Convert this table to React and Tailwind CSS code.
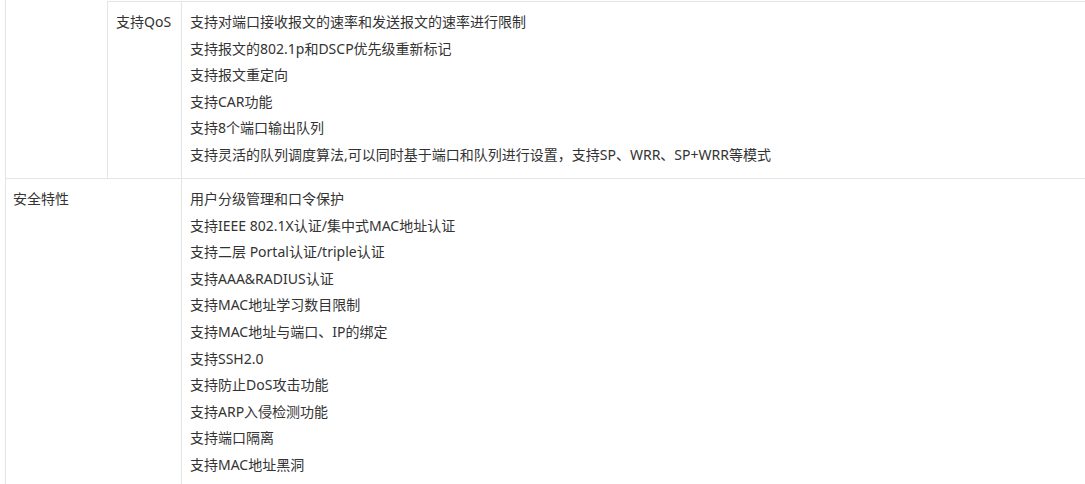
import React from 'react'

// spec table fragment: QoS sub-rows + security features
const qos = [
  '支持对端口接收报文的速率和发送报文的速率进行限制',
  '支持报文的802.1p和DSCP优先级重新标记',
  '支持报文重定向',
  '支持CAR功能',
  '支持8个端口输出队列',
  '支持灵活的队列调度算法,可以同时基于端口和队列进行设置，支持SP、WRR、SP+WRR等模式',
]

const security = [
  '用户分级管理和口令保护',
  '支持IEEE 802.1X认证/集中式MAC地址认证',
  '支持二层 Portal认证/triple认证',
  '支持AAA&RADIUS认证',
  '支持MAC地址学习数目限制',
  '支持MAC地址与端口、IP的绑定',
  '支持SSH2.0',
  '支持防止DoS攻击功能',
  '支持ARP入侵检测功能',
  '支持端口隔离',
  '支持MAC地址黑洞',
]

function Lines({ items }) {
  return items.map((t) => (
    <p key={t} className="whitespace-nowrap">{t}</p>
  ))
}

export default function App() {
  return (
    <div
      className="w-[1085px] h-[484px] overflow-hidden bg-white pl-[5px] text-[14px] leading-[26.6px] text-[#333]"
      style={{ fontFamily: '"Noto Sans", "Noto Sans CJK SC", sans-serif' }}
    >
      <div className="w-[1120px]">
        {/* QoS row (first column continues from above) */}
        <div className="flex h-[178px]">
          <div className="w-[102px] shrink-0 border-l border-[#e5e5e5]" />
          <div className="mt-[1px] w-[74px] shrink-0 border-l border-t border-[#e5e5e5] pl-2 pt-[7px]">
            支持QoS
          </div>
          <div className="mt-[1px] flex-1 border-l border-t border-[#e5e5e5] pl-2 pt-[7px]">
            <Lines items={qos} />
          </div>
        </div>

        {/* 安全特性 */}
        <div className="flex border-t border-[#e5e5e5]">
          <div className="w-[176px] shrink-0 border-l border-[#e5e5e5] pl-[7px] pt-[7px]">
            安全特性
          </div>
          <div className="flex-1 border-l border-[#e5e5e5] pl-2 pt-[7px] pb-[10px]">
            <Lines items={security} />
          </div>
        </div>
      </div>
    </div>
  )
}
